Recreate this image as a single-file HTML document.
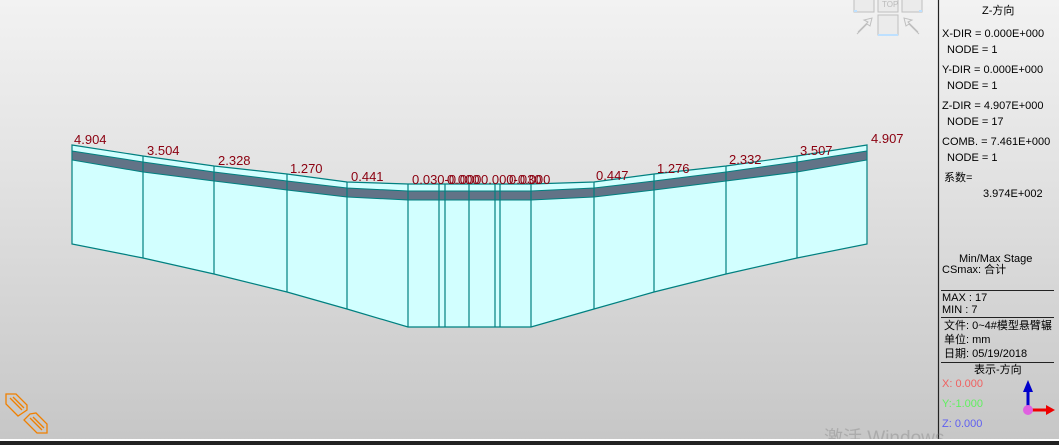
<!DOCTYPE html><html><head><meta charset="utf-8"><style>
html,body{margin:0;width:1059px;height:445px;overflow:hidden}
body{background:linear-gradient(#f2f2f2,#e4e4e4 35%,#c6c6c6);font-family:Tahoma,"Liberation Sans","Noto Sans CJK SC",sans-serif;position:relative}
.p{position:absolute;font-size:11px;line-height:13px;color:#000;white-space:nowrap}
</style></head><body>
<svg width="1059" height="445" style="position:absolute;left:0;top:0">
<polygon fill="#d2ffff" stroke="#008080" stroke-width="1.2" points="72,145 143,156 214,166 287,174 347,182 408,184 531,184 594,182 654,174 726,166 797,156 867,145 867,244 797,258 726,274 654,292 594,309 531,327 408,327 347,309 287,292 214,274 143,258 72,244"/>
<polygon fill="#627387" stroke="#008080" stroke-width="1" points="72,151 143,162 214,172 287,181 347,188 408,191 531,191 594,188 654,181 726,172 797,162 867,151 867,160 797,172 726,181 654,190 594,197 531,200 408,200 347,197 287,190 214,181 143,172 72,160"/>
<g stroke="#008080" stroke-width="1.2">
<line x1="143" y1="156" x2="143" y2="258"/><line x1="214" y1="166" x2="214" y2="274"/><line x1="287" y1="174" x2="287" y2="292"/><line x1="347" y1="182" x2="347" y2="309"/><line x1="408" y1="184" x2="408" y2="327"/><line x1="439" y1="184" x2="439" y2="327"/><line x1="445" y1="184" x2="445" y2="327"/><line x1="469" y1="184" x2="469" y2="327"/><line x1="495" y1="184" x2="495" y2="327"/><line x1="500" y1="184" x2="500" y2="327"/><line x1="531" y1="184" x2="531" y2="327"/><line x1="594" y1="182" x2="594" y2="309"/><line x1="654" y1="174" x2="654" y2="292"/><line x1="726" y1="166" x2="726" y2="274"/><line x1="797" y1="156" x2="797" y2="258"/>
</g>
<g fill="#8b0010" font-family="Liberation Sans" font-size="13">
<text x="74" y="144">4.904</text><text x="147" y="155">3.504</text><text x="218" y="165">2.328</text><text x="290" y="173">1.270</text><text x="351" y="181">0.441</text>
<text x="412" y="184">0.030-0.000</text><text x="447" y="184">0.000</text><text x="481" y="184">0.000-0.000</text><text x="509" y="184">0.030</text>
<text x="596" y="180">0.447</text><text x="657" y="173">1.276</text><text x="729" y="164">2.332</text><text x="800" y="155">3.507</text><text x="871" y="143">4.907</text>
</g>
<g fill="#ebebeb" stroke="#bfbfbf">
<rect x="854" y="-4" width="20" height="16"/><rect x="878" y="-4" width="20" height="16"/><rect x="902" y="-4" width="20" height="16"/>
<rect x="878" y="15" width="20" height="20"/>
<polyline fill="none" points="858,32 868,22 864,20 872,18 870,26 867,24 857,34"/>
<polyline fill="none" points="918,32 908,22 912,20 904,18 906,26 909,24 919,34"/>
</g>
<g fill="#bde0ff"><rect x="854" y="10" width="3" height="2"/><rect x="878" y="34" width="20" height="2"/><rect x="919" y="10" width="3" height="2"/></g>
<text x="882" y="7" font-size="8" fill="#bbb" font-family="Liberation Sans">TOP</text>
<g fill="none" stroke="#f08000" stroke-width="1.3">
<polygon points="6,394 16,394 27,405 27,410 18,416 6,404"/>
<polygon points="36,413 47,424 47,433 37,433 24,420 30,414"/>
<line x1="10" y1="398" x2="22" y2="410"/><line x1="13" y1="397" x2="24" y2="408"/>
<line x1="30" y1="418" x2="42" y2="430"/><line x1="33" y1="417" x2="44" y2="428"/>
</g>
<line x1="938.5" y1="0" x2="938.5" y2="440" stroke="#222" stroke-width="1.2"/>
<line x1="941" y1="290.5" x2="1054" y2="290.5" stroke="#222"/>
<line x1="941" y1="317.5" x2="1054" y2="317.5" stroke="#222"/>
<line x1="941" y1="362.5" x2="1054" y2="362.5" stroke="#222"/>
<text x="824" y="444" font-size="19" fill="rgba(120,120,120,.35)" font-family="Liberation Sans">激活 Windows</text>
<rect x="0" y="439" width="1059" height="2" fill="#fff"/><rect x="0" y="441" width="1059" height="4" fill="#222"/>
<line x1="1028" y1="409" x2="1028" y2="388" stroke="#00c" stroke-width="3"/><polygon points="1023,392 1028,380 1033,392" fill="#00c"/>
<line x1="1028" y1="410" x2="1050" y2="410" stroke="#e00" stroke-width="3"/><polygon points="1046,405 1055,410 1046,415" fill="#e00"/>
<circle cx="1028" cy="410" r="5" fill="#e060e0"/>
</svg>
<div class="p" style="left:982px;top:5px">Z-方向</div>
<div class="p" style="left:942px;top:28px">X-DIR = 0.000E+000</div>
<div class="p" style="left:947px;top:44px">NODE = 1</div>
<div class="p" style="left:942px;top:64px">Y-DIR = 0.000E+000</div>
<div class="p" style="left:947px;top:80px">NODE = 1</div>
<div class="p" style="left:942px;top:100px">Z-DIR = 4.907E+000</div>
<div class="p" style="left:947px;top:116px">NODE = 17</div>
<div class="p" style="left:942px;top:136px">COMB. = 7.461E+000</div>
<div class="p" style="left:947px;top:152px">NODE = 1</div>
<div class="p" style="left:944px;top:172px">系数=</div>
<div class="p" style="left:983px;top:188px">3.974E+002</div>
<div class="p" style="left:959px;top:253px">Min/Max Stage</div>
<div class="p" style="left:942px;top:264px">CSmax: 合计</div>
<div class="p" style="left:942px;top:292px">MAX : 17</div>
<div class="p" style="left:942px;top:304px">MIN : 7</div>
<div class="p" style="left:944px;top:320px">文件: 0~4#模型悬臂辗</div>
<div class="p" style="left:944px;top:334px">单位: mm</div>
<div class="p" style="left:944px;top:348px">日期: 05/19/2018</div>
<div class="p" style="left:974px;top:364px">表示-方向</div>
<div class="p" style="left:942px;top:378px;color:#f06060">X: 0.000</div>
<div class="p" style="left:942px;top:398px;color:#60f060">Y:-1.000</div>
<div class="p" style="left:942px;top:418px;color:#6060f0">Z: 0.000</div>
</body></html>
